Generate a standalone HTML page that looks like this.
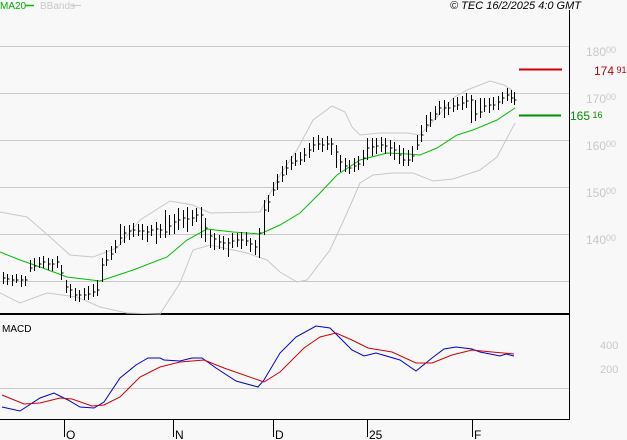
<!DOCTYPE html>
<html><head><meta charset="utf-8"><style>
html,body{margin:0;padding:0;background:#f8f8f8;}
svg{display:block;font-family:"Liberation Sans",sans-serif;}
</style></head><body>
<svg width="627" height="440" viewBox="0 0 627 440" xmlns="http://www.w3.org/2000/svg">
<rect width="627" height="440" fill="#f8f8f8"/>
<g stroke="#c8c8c8" stroke-width="1">
<line x1="0" y1="46.5" x2="569" y2="46.5"/>
<line x1="0" y1="93.5" x2="569" y2="93.5"/>
<line x1="0" y1="140.5" x2="569" y2="140.5"/>
<line x1="0" y1="187.5" x2="569" y2="187.5"/>
<line x1="0" y1="234.5" x2="569" y2="234.5"/>
<line x1="0" y1="281.5" x2="569" y2="281.5"/>
<line x1="0" y1="388.5" x2="569" y2="388.5"/>
</g>
<g font-size="12" fill="#c8c8c8">
<text x="586" y="56">180<tspan font-size="9" dy="-3">00</tspan></text>
<text x="586" y="103">170<tspan font-size="9" dy="-3">00</tspan></text>
<text x="586" y="150">160<tspan font-size="9" dy="-3">00</tspan></text>
<text x="586" y="197">150<tspan font-size="9" dy="-3">00</tspan></text>
<text x="586" y="244">140<tspan font-size="9" dy="-3">00</tspan></text>
<text x="600" y="349" font-size="11">400</text>
<text x="600" y="373" font-size="11">200</text>
</g>
<line x1="569.5" y1="10" x2="569.5" y2="420" stroke="#000"/>
<line x1="0" y1="314" x2="570" y2="314" stroke="#000" stroke-width="2"/>
<line x1="0" y1="419.5" x2="570" y2="419.5" stroke="#000"/>
<g stroke="#000">
<line x1="64.5" y1="420" x2="64.5" y2="437"/>
<line x1="173.5" y1="420" x2="173.5" y2="437"/>
<line x1="273.5" y1="420" x2="273.5" y2="437"/>
<line x1="367.5" y1="420" x2="367.5" y2="437"/>
<line x1="472.5" y1="420" x2="472.5" y2="437"/>
</g>
<g font-size="12" fill="#000">
<text x="66" y="439">O</text><text x="175" y="439">N</text><text x="275" y="439">D</text><text x="369" y="439">25</text><text x="474" y="439">F</text>
</g>
<text x="0" y="9" font-size="10" fill="#00b000">MA20</text>
<line x1="25" y1="5.5" x2="34" y2="5.5" stroke="#00c000" stroke-width="1.5"/>
<text x="40" y="9" font-size="10" fill="#c8c8c8">BBands</text>
<line x1="72" y1="5.5" x2="81" y2="5.5" stroke="#c8c8c8"/>
<text x="450" y="9" font-size="11" font-style="italic" fill="#000">© TEC 16/2/2025 4:0 GMT</text>
<text x="2" y="332" font-size="10" fill="#000">MACD</text>
<line x1="519" y1="69.5" x2="562" y2="69.5" stroke="#d00000" stroke-width="2"/>
<text x="594" y="75" font-size="12" fill="#c00000">174<tspan font-size="9" dy="-2"> 91</tspan></text>
<line x1="519" y1="115.5" x2="561" y2="115.5" stroke="#009000" stroke-width="2"/>
<text x="570" y="120" font-size="12" fill="#009000">165<tspan font-size="9" dy="-2"> 16</tspan></text>
<polyline fill="none" stroke="#c8c8c8" points="0,212 27,217 50,237 70,255 93,257 117,248 140,220 170,201 193,205 210,213 260,212 280,175 297,150 313,120 332,106 345,112 352,127 360,135 380,133 407,133 420,135 437,117 453,98 467,90 490,81 504,85 512,90"/>
<polyline fill="none" stroke="#c8c8c8" points="0,293 20,303 47,293 77,297 100,307 127,313 160,314 180,283 193,250 210,245 247,253 267,260 280,272 297,282 307,280 330,250 347,213 360,183 373,175 393,173 413,173 433,181 453,179 480,170 497,157 515,123"/>
<polyline fill="none" stroke="#00c000" points="0,252 20,260 40,267 67,277 100,281 133,270 167,257 187,240 207,229 233,232 260,234 280,225 300,213 320,193 337,175 360,160 387,153 407,154 420,155 437,148 457,135 473,130 497,120 515,108"/>
<path fill="none" stroke="#000" d="M3.5 272V284M3.5 278h2M7.5 274V285M7.5 279h2M12.5 275V286M12.5 280h2M16.5 274V283M16.5 280h2M21.5 275V287M21.5 280h2M25.5 276V286M25.5 280h2M30.5 260V272M30.5 268h2M34.5 258V271M34.5 266h2M39.5 257V268M39.5 264h2M43.5 256V268M43.5 262h2M48.5 258V270M48.5 264h2M52.5 259V271M52.5 264h2M57.5 256V268M57.5 262h2M61.5 265V280M61.5 273h2M66.5 280V293M66.5 287h2M70.5 284V298M70.5 290h2M75.5 288V301M75.5 295h2M79.5 290V302M79.5 295h2M84.5 288V300M84.5 295h2M88.5 286V300M88.5 294h2M93.5 284V297M93.5 292h2M97.5 280V296M97.5 290h2M102.5 258V282M102.5 265h2M106.5 250V266M106.5 260h2M111.5 246V260M111.5 254h2M115.5 240V253M115.5 247h2M120.5 224V245M120.5 238h2M124.5 226V243M124.5 233h2M129.5 225V240M129.5 231h2M133.5 223V237M133.5 230h2M138.5 224V236M138.5 231h2M142.5 224V240M142.5 231h2M147.5 226V242M147.5 232h2M151.5 225V236M151.5 230h2M156.5 222V244M156.5 229h2M160.5 224V238M160.5 230h2M165.5 210V238M165.5 232h2M169.5 215V235M169.5 226h2M174.5 214V234M174.5 222h2M178.5 208V230M178.5 220h2M183.5 210V228M183.5 218h2M187.5 207V232M187.5 219h2M192.5 210V226M192.5 218h2M196.5 208V222M196.5 215h2M201.5 207V238M201.5 215h2M205.5 218V242M205.5 228h2M210.5 230V248M210.5 236h2M214.5 233V250M214.5 239h2M219.5 235V249M219.5 242h2M223.5 236V250M223.5 243h2M228.5 238V257M228.5 243h2M232.5 233V248M232.5 241h2M237.5 233V247M237.5 240h2M241.5 232V249M241.5 240h2M246.5 232V246M246.5 241h2M250.5 238V252M250.5 244h2M255.5 240V255M255.5 247h2M259.5 228V258M259.5 233h2M264.5 200V235M264.5 210h2M268.5 195V212M268.5 202h2M273.5 182V196M273.5 190h2M277.5 174V190M277.5 182h2M282.5 166V182M282.5 175h2M286.5 160V175M286.5 168h2M291.5 156V170M291.5 163h2M295.5 153V166M295.5 161h2M300.5 152V165M300.5 160h2M304.5 148V162M304.5 155h2M309.5 143V158M309.5 150h2M313.5 137V152M313.5 145h2M318.5 135V150M318.5 144h2M322.5 138V152M322.5 145h2M327.5 136V150M327.5 144h2M331.5 138V155M331.5 144h2M336.5 145V168M336.5 152h2M340.5 155V172M340.5 162h2M345.5 158V172M345.5 166h2M349.5 160V174M349.5 168h2M354.5 158V172M354.5 166h2M358.5 156V170M358.5 164h2M363.5 150V166M363.5 158h2M367.5 138V160M367.5 148h2M372.5 138V156M372.5 147h2M376.5 138V154M376.5 146h2M381.5 137V152M381.5 145h2M385.5 138V154M385.5 146h2M390.5 140V156M390.5 148h2M394.5 142V160M394.5 150h2M399.5 145V164M399.5 155h2M403.5 148V166M403.5 160h2M408.5 150V166M408.5 160h2M412.5 146V162M412.5 156h2M417.5 135V150M417.5 145h2M421.5 125V142M421.5 135h2M426.5 115V132M426.5 125h2M430.5 112V127M430.5 120h2M435.5 106V120M435.5 114h2M439.5 101V115M439.5 108h2M444.5 100V118M444.5 108h2M448.5 102V115M448.5 108h2M453.5 98V112M453.5 106h2M457.5 97V110M457.5 105h2M462.5 96V110M462.5 103h2M466.5 93V108M466.5 101h2M471.5 95V123M471.5 100h2M475.5 100V121M475.5 114h2M480.5 98V118M480.5 112h2M484.5 98V112M484.5 106h2M489.5 98V113M489.5 105h2M493.5 97V110M493.5 105h2M498.5 96V110M498.5 102h2M502.5 92V104M502.5 98h2M507.5 88V101M507.5 95h2M511.5 90V103M511.5 98h2M514.5 92V105M514.5 100h2"/>
<polyline fill="none" stroke="#0000d0" points="2,407 20,411 40,398 54,393 68,400 80,407 94,408 104,402 120,378 136,365 148,358 160,358 164,360 180,361 192,358 202,358 216,368 236,381 258,387 264,380 280,353 296,337 316,326 330,328 352,350 364,356 376,353 400,360 416,371 432,358 444,349 456,347 472,349 480,352 500,356 506,354 514,356"/>
<polyline fill="none" stroke="#d00000" points="2,395 24,404 40,403 60,398 72,399 92,406 104,405 120,397 140,377 160,367 180,362 204,360 224,368 264,382 280,372 304,348 320,337 336,333 352,340 368,348 392,352 416,363 432,363 452,355 472,350 492,352 514,354"/>
</svg>
</body></html>
